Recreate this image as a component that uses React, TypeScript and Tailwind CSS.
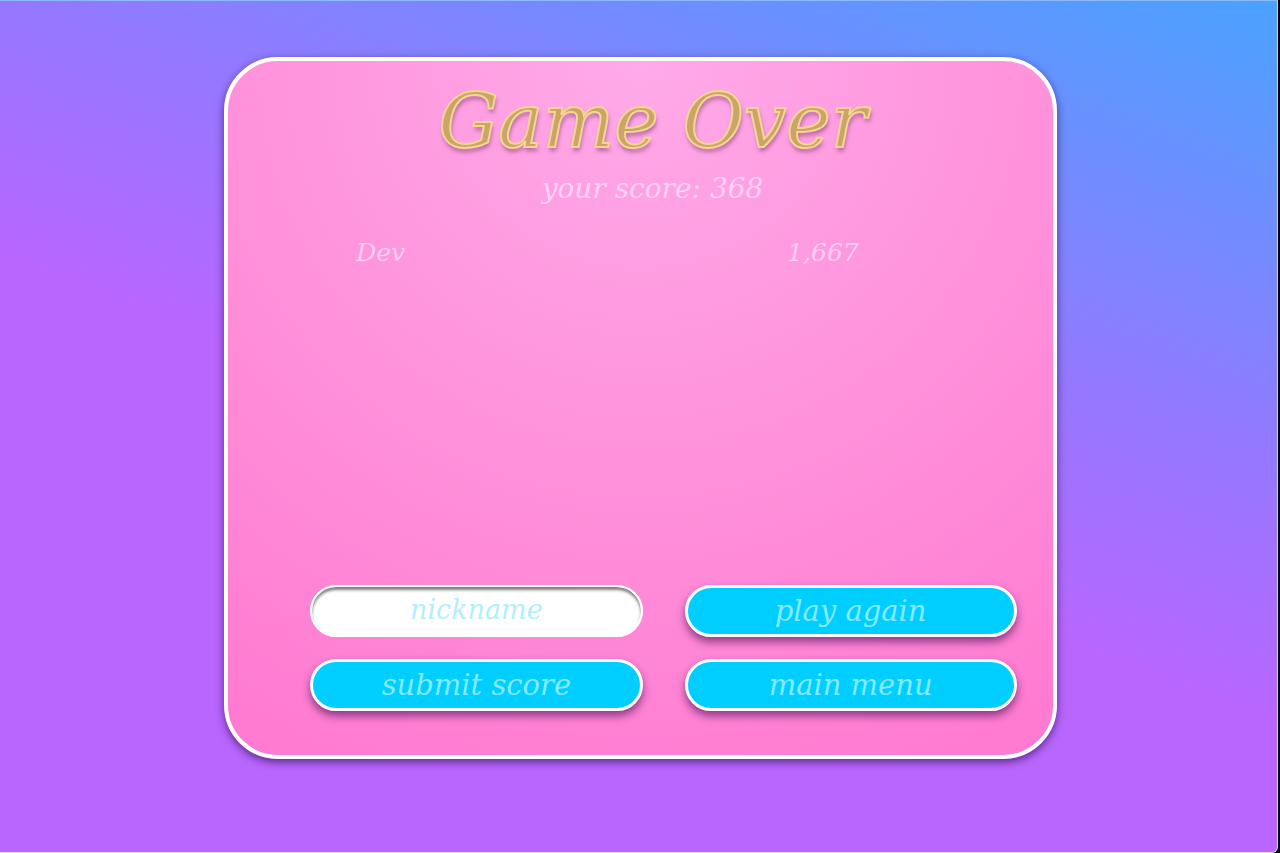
import React, { useState } from "react";

interface ScoreEntry {
  name: string;
  score: number;
}

interface GameOverProps {
  score: number;
  leaders: ScoreEntry[];
}

const buttonClass =
  "h-[52px] rounded-full border-3 border-white bg-[#00ceff] text-[29px] leading-none text-[#84eaff] shadow-[0_5px_8px_rgba(80,20,90,0.65)] hover:bg-[#22d6ff] transition-colors";

const GameOver: React.FC<GameOverProps> = ({ score, leaders }) => {
  const [nickname, setNickname] = useState("");

  return (
    <section className="flex min-h-[82.3vh] w-[65.4%] flex-col rounded-[54px] border-4 border-white bg-[radial-gradient(circle_at_top,#ffaae9_0%,#ff94dc_45%,#ff78d0_100%)] pt-4 pb-11 shadow-[0_3px_8px_rgba(40,10,70,0.65)]">
      <h1 className="pl-6 text-center text-[75px] leading-[88px] text-[#cba565] [-webkit-text-stroke:2px_#f3d693] [text-shadow:1px_4px_4px_rgba(110,40,90,0.5)]">
        Game Over
      </h1>
      <p className="mt-1 pl-6 text-center text-[28px] leading-10 text-[#ffd0f5]">
        your score: {score}
      </p>

      {/* Leaderboard */}
      <div className="flex-1 pt-6 pr-[194px] pl-32">
        <table className="w-full text-[25px] leading-10 text-[#ffcef4]">
          <tbody>
            {leaders.map((entry) => (
              <tr key={entry.name}>
                <td>{entry.name}</td>
                <td className="text-right">{entry.score.toLocaleString("en-US")}</td>
              </tr>
            ))}
          </tbody>
        </table>
      </div>

      {/* Actions */}
      <form
        className="grid grid-cols-2 gap-x-[42px] gap-y-[22px] pr-9 pl-[82px]"
        onSubmit={(e) => e.preventDefault()}
      >
        <input
          type="text"
          aria-label="nickname"
          placeholder="nickname"
          value={nickname}
          onChange={(e) => setNickname(e.target.value)}
          className="h-[52px] w-full min-w-0 rounded-full border-2 border-white bg-white pb-1 text-center text-[27px] text-[#00ceff] italic shadow-[inset_0_3px_3px_rgba(0,0,0,0.5)] outline-none placeholder:text-[#b0effb]"
        />
        <button type="button" className={buttonClass}>
          play again
        </button>
        <button type="submit" className={buttonClass}>
          submit score
        </button>
        <button type="button" className={buttonClass}>
          main menu
        </button>
      </form>
    </section>
  );
};

export default function App() {
  return (
    <div className="min-h-screen bg-black pr-[2px] font-['DejaVu_Serif',serif] italic">
      <main className="flex min-h-screen items-start justify-center rounded-br-md border-t border-r border-b border-t-[#8db9ff] border-r-[#d8cfff] border-b-[#ead0ff] bg-[linear-gradient(200deg,#4aa2ff_0%,#9379ff_34%,#b966ff_55%)] py-14 pl-1">
        <GameOver score={368} leaders={[{ name: "Dev", score: 1667 }]} />
      </main>
    </div>
  );
}
